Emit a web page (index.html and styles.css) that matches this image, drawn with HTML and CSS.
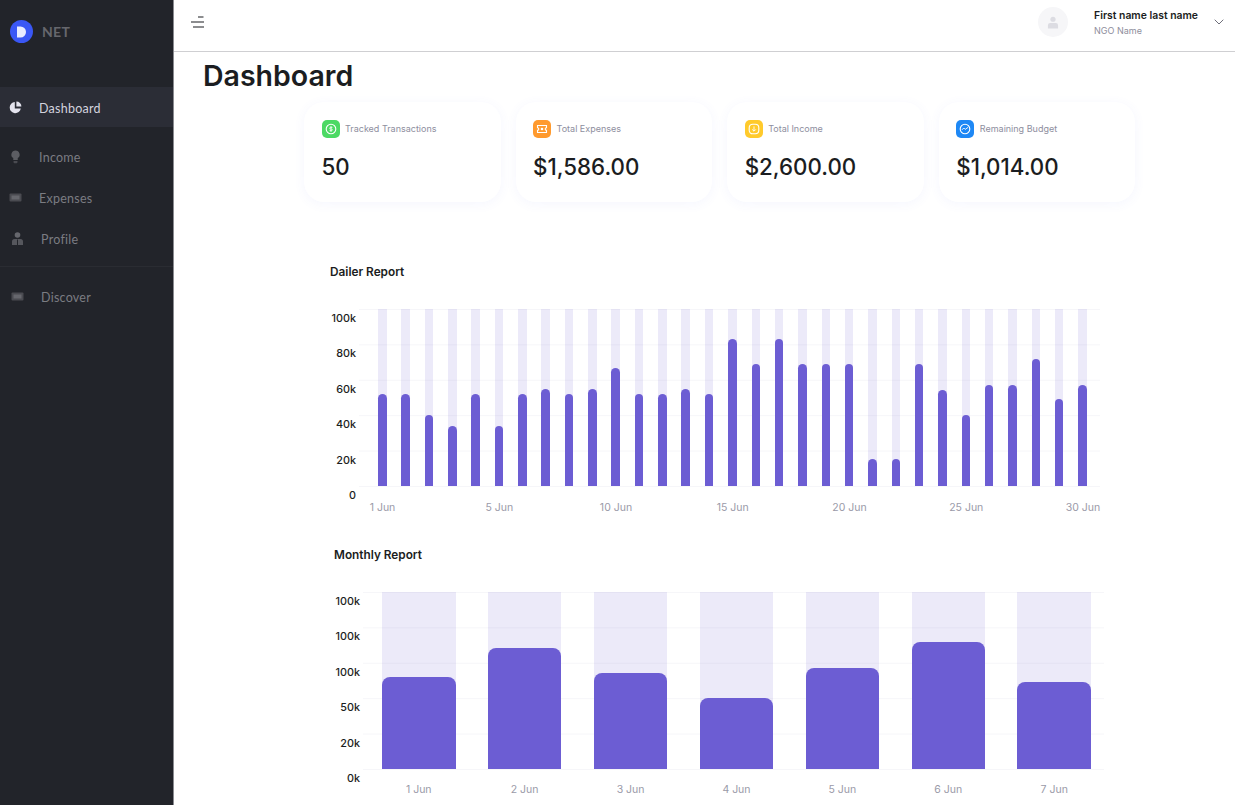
FILE: index.html
```html
<!DOCTYPE html>
<html lang="en">
<head>
    <meta charset="UTF-8">
    <meta name="viewport" content="width=device-width, initial-scale=1.0">
    <title>Dashboard</title>
    <link rel="stylesheet" href="styles.css">
</head>
<body>
    <div class="app">
        <aside class="sidebar">
            <div class="brand">
                <span class="brand-logo">
                    <svg width="12" height="12" viewBox="0 0 12 12"><path d="M1 0.5h3.5a5.5 5.5 0 0 1 0 11H1z" fill="#e9ecff"/></svg>
                </span>
                <span class="brand-name">NET</span>
            </div>
            <nav class="nav">
                <a class="nav-item active">
                    <svg class="nav-icon" width="13" height="13" viewBox="0 0 13 13"><path d="M5.8 1a5.6 5.6 0 1 0 6 6.6H5.8z" fill="#e4e4ee"/><path d="M7.4 0.6a5 5 0 0 1 5 5H7.4z" fill="#e4e4ee"/></svg>
                    <span>Dashboard</span>
                </a>
                <a class="nav-item income">
                    <svg class="nav-icon" width="13" height="14" viewBox="0 0 13 15"><path d="M6.5 0.5a4.4 4.4 0 0 1 2.4 8.1v2.2H4.1V8.6A4.4 4.4 0 0 1 6.5 0.5z" fill="#5c5d63"/><path d="M4.4 11.8h4.2v1.4a1 1 0 0 1-1 1H5.4a1 1 0 0 1-1-1z" fill="#4a4b51"/></svg>
                    <span>Income</span>
                </a>
                <a class="nav-item expenses">
                    <svg class="nav-icon" width="13" height="9" viewBox="0 0 13 9"><rect x="0.5" y="0.5" width="12" height="8" rx="1" fill="#4a4b51"/><rect x="2.5" y="2.5" width="8" height="4" fill="#66676d"/></svg>
                    <span>Expenses</span>
                </a>
                <a class="nav-item profile">
                    <svg class="nav-icon" width="13" height="13" viewBox="0 0 13 13"><circle cx="6.5" cy="3" r="2.8" fill="#66676d"/><path d="M1 13V9.5a2.5 2.5 0 0 1 2.5-2.5h6A2.5 2.5 0 0 1 12 9.5V13z" fill="#56575d"/><path d="M6.5 7.5v5.5" stroke="#22242a" stroke-width="1"/></svg>
                    <span>Profile</span>
                </a>
                <div class="nav-divider"></div>
                <a class="nav-item discover">
                    <svg class="nav-icon" width="13" height="9" viewBox="0 0 13 9"><rect x="0.5" y="0.5" width="12" height="8" rx="1" fill="#4a4b51"/><rect x="2.5" y="2.5" width="8" height="4" fill="#66676d"/></svg>
                    <span>Discover</span>
                </a>
            </nav>
        </aside>

        <div class="main">
            <header class="topbar">
                <svg class="menu-icon" width="14" height="13" viewBox="0 0 14 13"><path d="M7 1h5.5M0 6h13M2 11h11" stroke="#1b1d21" stroke-width="1.2" fill="none"/></svg>
                <div class="user">
                    <span class="avatar">
                        <svg width="12" height="13" viewBox="0 0 13 13"><circle cx="6.5" cy="3" r="2.8" fill="#dcdce2"/><path d="M1 13V9.5a2.5 2.5 0 0 1 2.5-2.5h6A2.5 2.5 0 0 1 12 9.5V13z" fill="#dcdce2"/></svg>
                    </span>
                    <div class="user-text">
                        <div class="user-name">First name last name</div>
                        <div class="user-org">NGO Name</div>
                    </div>
                    <svg class="chevron" width="10" height="6" viewBox="0 0 10 6"><path d="M0.7 0.7L5 5l4.3-4.3" stroke="#6f6f7a" stroke-width="1" fill="none"/></svg>
                </div>
            </header>

            <h1 class="page-title">Dashboard</h1>

            <section class="cards">
                <div class="card">
                    <div class="card-head">
                        <span class="card-icon green">
                            <svg width="12" height="12" viewBox="0 0 12 12"><circle cx="6" cy="6" r="4.8" stroke="#fff" stroke-width="1.1" fill="none"/><path d="M6 3v6M7.4 4.4H5.5a.8.8 0 0 0 0 1.6h1a.8.8 0 0 1 0 1.6H4.6" stroke="#fff" stroke-width=".8" fill="none"/></svg>
                        </span>
                        <span class="card-label">Tracked Transactions</span>
                    </div>
                    <div class="card-value">50</div>
                </div>
                <div class="card">
                    <div class="card-head">
                        <span class="card-icon orange">
                            <svg width="12" height="12" viewBox="0 0 12 12"><path d="M1.5 2.5h9v2.2a1.3 1.3 0 0 0 0 2.6v2.2h-9V7.3a1.3 1.3 0 0 0 0-2.6z" stroke="#fff" stroke-width="1.1" fill="none"/><circle cx="6" cy="6" r="1.3" fill="#fff"/></svg>
                        </span>
                        <span class="card-label">Total Expenses</span>
                    </div>
                    <div class="card-value">$1,586.00</div>
                </div>
                <div class="card">
                    <div class="card-head">
                        <span class="card-icon yellow">
                            <svg width="12" height="12" viewBox="0 0 12 12"><rect x="1.2" y="1.2" width="9.6" height="9.6" rx="3.5" stroke="#fff" stroke-width="1.1" fill="none"/><path d="M6 3.4v4.6M4.2 6.4L6 8.2l1.8-1.8" stroke="#fff" stroke-width=".9" fill="none"/></svg>
                        </span>
                        <span class="card-label">Total Income</span>
                    </div>
                    <div class="card-value">$2,600.00</div>
                </div>
                <div class="card">
                    <div class="card-head">
                        <span class="card-icon blue">
                            <svg width="12" height="12" viewBox="0 0 12 12"><circle cx="6" cy="6" r="4.8" stroke="#fff" stroke-width="1.1" fill="none"/><path d="M3 6.8l1.8-1.8 1.4 1.4L9 4.4" stroke="#fff" stroke-width=".9" fill="none"/></svg>
                        </span>
                        <span class="card-label">Remaining Budget</span>
                    </div>
                    <div class="card-value">$1,014.00</div>
                </div>
            </section>

            <section class="report daily">
                <h2 class="report-title">Dailer Report</h2>
                <div class="chart">
                    <div class="axis">
                        <span>100k</span><span>80k</span><span>60k</span><span>40k</span><span>20k</span><span>0</span>
                    </div>
                    <div class="plot">
                        <div class="track"><div class="bar" style="height:92px"></div></div>
                        <div class="track"><div class="bar" style="height:92px"></div></div>
                        <div class="track"><div class="bar" style="height:71px"></div></div>
                        <div class="track"><div class="bar" style="height:60px"></div></div>
                        <div class="track"><div class="bar" style="height:92px"></div></div>
                        <div class="track"><div class="bar" style="height:60px"></div></div>
                        <div class="track"><div class="bar" style="height:92px"></div></div>
                        <div class="track"><div class="bar" style="height:97px"></div></div>
                        <div class="track"><div class="bar" style="height:92px"></div></div>
                        <div class="track"><div class="bar" style="height:97px"></div></div>
                        <div class="track"><div class="bar" style="height:118px"></div></div>
                        <div class="track"><div class="bar" style="height:92px"></div></div>
                        <div class="track"><div class="bar" style="height:92px"></div></div>
                        <div class="track"><div class="bar" style="height:97px"></div></div>
                        <div class="track"><div class="bar" style="height:92px"></div></div>
                        <div class="track"><div class="bar" style="height:147px"></div></div>
                        <div class="track"><div class="bar" style="height:122px"></div></div>
                        <div class="track"><div class="bar" style="height:147px"></div></div>
                        <div class="track"><div class="bar" style="height:122px"></div></div>
                        <div class="track"><div class="bar" style="height:122px"></div></div>
                        <div class="track"><div class="bar" style="height:122px"></div></div>
                        <div class="track"><div class="bar" style="height:27px"></div></div>
                        <div class="track"><div class="bar" style="height:27px"></div></div>
                        <div class="track"><div class="bar" style="height:122px"></div></div>
                        <div class="track"><div class="bar" style="height:96px"></div></div>
                        <div class="track"><div class="bar" style="height:71px"></div></div>
                        <div class="track"><div class="bar" style="height:101px"></div></div>
                        <div class="track"><div class="bar" style="height:101px"></div></div>
                        <div class="track"><div class="bar" style="height:127px"></div></div>
                        <div class="track"><div class="bar" style="height:87px"></div></div>
                        <div class="track"><div class="bar" style="height:101px"></div></div>
                    </div>
                    <div class="x-labels">
                        <span>1 Jun</span><span>5 Jun</span><span>10 Jun</span><span>15 Jun</span><span>20 Jun</span><span>25 Jun</span><span>30 Jun</span>
                    </div>
                </div>
            </section>

            <section class="report monthly">
                <h2 class="report-title">Monthly Report</h2>
                <div class="chart">
                    <div class="axis">
                        <span>100k</span><span>100k</span><span>100k</span><span>50k</span><span>20k</span><span>0k</span>
                    </div>
                    <div class="plot">
                        <div class="track"><div class="bar" style="height:92px"></div></div>
                        <div class="track"><div class="bar" style="height:121px"></div></div>
                        <div class="track"><div class="bar" style="height:96px"></div></div>
                        <div class="track"><div class="bar" style="height:71px"></div></div>
                        <div class="track"><div class="bar" style="height:101px"></div></div>
                        <div class="track"><div class="bar" style="height:127px"></div></div>
                        <div class="track"><div class="bar" style="height:87px"></div></div>
                    </div>
                    <div class="x-labels">
                        <span>1 Jun</span><span>2 Jun</span><span>3 Jun</span><span>4 Jun</span><span>5 Jun</span><span>6 Jun</span><span>7 Jun</span>
                    </div>
                </div>
            </section>
        </div>
    </div>
</body>
</html>
```

FILE: styles.css
```css
html, body {
    margin: 0;
    padding: 0;
    height: 100%;
    background: #fff;
    overflow: hidden;
    font-family: "Inter", "Liberation Sans", sans-serif;
    color: #1b1d21;
}
.app {
    display: flex;
    height: 805px;
}

/* sidebar */
.sidebar {
    width: 173px;
    flex: none;
    background-color: #22242a;
    border-right: 1px solid #8a8b90;
    font-family: "Lato", "Noto Sans", sans-serif;
}
.brand {
    display: flex;
    align-items: center;
    gap: 9px;
    height: 63px;
    padding-left: 10px;
}
.brand-logo {
    width: 23px;
    height: 23px;
    border-radius: 50%;
    background-color: #3a57f5;
    display: flex;
    align-items: center;
    justify-content: center;
}
.brand-name {
    font-size: 14px;
    font-weight: 700;
    letter-spacing: 0.3px;
    color: #66676d;
}
.nav {
    padding-top: 24px;
}
.nav-item {
    display: flex;
    align-items: center;
    height: 41px;
    padding-left: 9px;
    font-size: 12.5px;
    letter-spacing: 0.25px;
    color: #7b7c82;
}
.nav-item span {
    margin: 2px 0 0 17px;
}
.nav-item.active {
    height: 40px;
    margin-bottom: 9px;
    background-color: #2b2d36;
    color: #d3d3de;
}
.nav-item.profile {
    padding-left: 11px;
}
.nav-icon {
    flex: none;
}
.nav-divider {
    height: 1px;
    margin: 7px 0 9px;
    background-color: #2a2c32;
}
.nav-item.discover {
    padding-left: 11px;
}

/* main column */
.main {
    flex: 1;
    min-width: 0;
}
.topbar {
    height: 44px;
    border-bottom: 1px solid #cfcfd2;
    display: flex;
    align-items: center;
    justify-content: space-between;
    padding: 0 11px 7px 17px;
}
.user {
    display: flex;
    align-items: center;
}
.avatar {
    width: 30px;
    height: 30px;
    border-radius: 50%;
    background-color: #f6f6f8;
    display: flex;
    align-items: center;
    justify-content: center;
}
.user-text {
    margin: 1px 16px 0 26px;
}
.user-name {
    font-size: 10.4px;
    font-weight: 600;
    line-height: 16px;
}
.user-org {
    font-size: 9px;
    line-height: 14px;
    color: #8e8e9c;
}
.page-title {
    margin: 6px 0 8px 29px;
    font-size: 28.5px;
    line-height: 36px;
    font-weight: 600;
    color: #1b1d21;
}

/* stat cards */
.cards {
    display: flex;
    gap: 15px;
    margin-left: 130px;
}
.card {
    width: 196.6px;
    height: 100px;
    box-sizing: border-box;
    padding: 18px 18px 0 17.5px;
    border-radius: 20px;
    background: #fff;
    box-shadow: 0 2px 12px rgba(90, 110, 240, 0.06);
}
.card-head {
    display: flex;
    align-items: center;
    gap: 5.5px;
}
.card-icon {
    width: 18px;
    height: 18px;
    border-radius: 5px;
    display: flex;
    align-items: center;
    justify-content: center;
}
.green { background-color: #4cd964; }
.orange { background-color: #ff9a2e; }
.yellow { background-color: #ffca2c; }
.blue { background-color: #1e88f5; }
.card-label {
    font-size: 9px;
    line-height: 16px;
    margin-top: -1px;
    color: #8e8e9e;
}
.card-value {
    margin-top: 12px;
    font-size: 22.3px;
    line-height: 34px;
    font-weight: 500;
}

/* reports */
.report-title {
    margin: 0 0 29px;
    font-size: 11.8px;
    line-height: 16px;
    font-weight: 600;
}
.daily {
    margin: 62px 0 0 156px;
}
.monthly {
    margin: 32px 0 0 160px;
}
.chart {
    display: grid;
    grid-template-columns: 26px 741px;
    grid-template-rows: 178px auto;
    column-gap: 3px;
}
.axis {
    grid-row: 1 / span 2;
    display: flex;
    flex-direction: column;
    padding-top: 3px;
    text-align: right;
    font-size: 10.8px;
    font-weight: 500;
}
.axis span {
    height: 35.4px;
    line-height: 14px;
    flex: none;
}
.axis span:last-child {
    height: 14px;
}
.plot {
    display: flex;
    justify-content: space-between;
    padding: 0 13px 0 19px;
    height: 178px;
    box-sizing: border-box;
    border-bottom: 1px solid #f6f6f9;
    background-image: linear-gradient(to bottom, #f6f6f9 1px, transparent 1px);
    background-size: 100% 35.4px;
}
.track {
    width: 8.5px;
    height: 177px;
    display: flex;
    align-items: flex-end;
    background-color: rgba(108, 93, 211, 0.13);
}
.bar {
    width: 100%;
    background-color: #6c5dd3;
    border-radius: 4.5px 4.5px 0 0;
}
.monthly .track {
    width: 73.5px;
}
.monthly .bar {
    border-radius: 8px 8px 0 0;
}
.x-labels {
    grid-column: 2;
    display: flex;
    justify-content: space-between;
    margin: 14px -3px 0 0;
    padding-left: 3.5px;
    font-size: 10.5px;
    line-height: 14px;
    color: #9a9aa8;
    text-align: center;
}
.x-labels span {
    width: 40px;
    flex: none;
}
.monthly .x-labels {
    margin: 13px 0 0;
    padding: 0 13px 0 19px;
}
.monthly .x-labels span {
    width: 73.5px;
}
```
